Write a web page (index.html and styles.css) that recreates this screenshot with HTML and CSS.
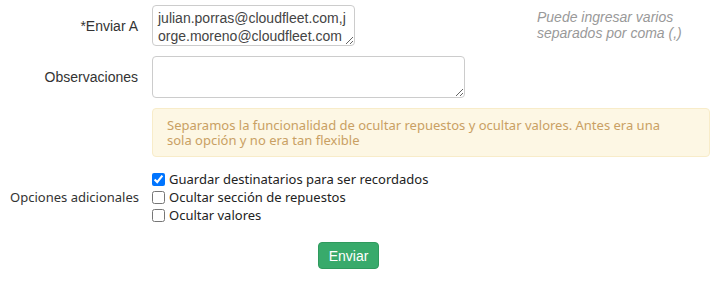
FILE: index.html
```html
<!DOCTYPE html>
<html lang="es">

<head>
    <meta charset="UTF-8">
    <title>Enviar reporte</title>
    <link rel="stylesheet" href="styles.css">
</head>

<body>
    <form class="form">
        <!-- Destinatarios -->
        <div class="row">
            <label class="label" for="enviarA">*Enviar A</label>
            <div class="field field-to">
                <textarea id="enviarA" class="input input-to">julian.porras@cloudfleet.com,jorge.moreno@cloudfleet.com</textarea>
                <p class="help">Puede ingresar varios separados por coma (,)</p>
            </div>
        </div>

        <div class="row">
            <label class="label" for="obs">Observaciones</label>
            <div class="field">
                <textarea id="obs" class="input input-obs"></textarea>
            </div>
        </div>

        <div class="row">
            <div class="label"></div>
            <div class="field">
                <div class="alert">Separamos la funcionalidad de ocultar repuestos y ocultar valores. Antes era una sola opción y no era tan flexible</div>
            </div>
        </div>

        <div class="row row-options">
            <div class="label">Opciones adicionales</div>
            <div class="field checks">
                <label class="check"><input type="checkbox" checked> Guardar destinatarios para ser recordados</label>
                <label class="check"><input type="checkbox"> Ocultar sección de repuestos</label>
                <label class="check"><input type="checkbox"> Ocultar valores</label>
            </div>
        </div>

        <div class="actions">
            <button type="button" class="btn">Enviar</button>
        </div>
    </form>
</body>

</html>
```

FILE: styles.css
```css
* {
    margin: 0;
    padding: 0;
    box-sizing: border-box;
}

body {
    background: #fff;
    font-family: 'Liberation Sans', Arial, sans-serif;
    font-size: 14px;
    color: #333;
}

.form {
    width: 721px;
    padding: 5px 11px 0 0;
}

.row {
    display: grid;
    grid-template-columns: 152px 1fr;
    align-items: center;
    margin-bottom: 10px;
}

.label {
    text-align: right;
    padding-right: 14px;
    color: #333;
    font-size: 14px;
}

.field-to {
    display: flex;
    align-items: flex-start;
}

.input {
    display: block;
    font-family: 'Liberation Sans', Arial, sans-serif;
    font-size: 14px;
    line-height: 18px;
    color: #444;
    border: 1px solid #ccc;
    border-radius: 4px;
    padding: 3px 5px;
    resize: both;
    outline: none;
}

.input-to {
    width: 203px;
    height: 41px;
    overflow: hidden;
}

.input-obs {
    width: 313px;
    height: 42px;
}

.help {
    margin-left: 182px;
    margin-top: 4px;
    width: 180px;
    font-style: italic;
    color: #999;
    line-height: 16px;
}

.alert {
    background: #fdf7e4;
    border: 1px solid #f8ecc9;
    border-radius: 4px;
    color: #c9a063;
    font-family: 'Noto Sans', sans-serif;
    font-size: 13px;
    line-height: 15px;
    padding: 9px 40px 6px 14px;
    height: 49px;
}

.row-options {
    margin-top: 13px;
}

.row-options .label {
    font-family: 'Noto Sans', sans-serif;
    font-size: 13px;
    padding-right: 13px;
}

.checks {
    display: flex;
    flex-direction: column;
}

.check {
    display: flex;
    align-items: center;
    height: 18px;
    font-family: 'Noto Sans', sans-serif;
    font-size: 13px;
    color: #222;
}

.check input {
    width: 13px;
    height: 13px;
    margin: 0 4px 0 0;
}

.actions {
    display: flex;
    justify-content: center;
    padding-right: 13px;
    margin-top: 18px;
}

.btn {
    background: #38aa6b;
    color: #fff;
    border: 1px solid #2f9a5d;
    border-radius: 4px;
    font-family: 'Liberation Sans', Arial, sans-serif;
    font-size: 14px;
    padding: 0;
    height: 27px;
    width: 61px;
    cursor: pointer;
}
```
